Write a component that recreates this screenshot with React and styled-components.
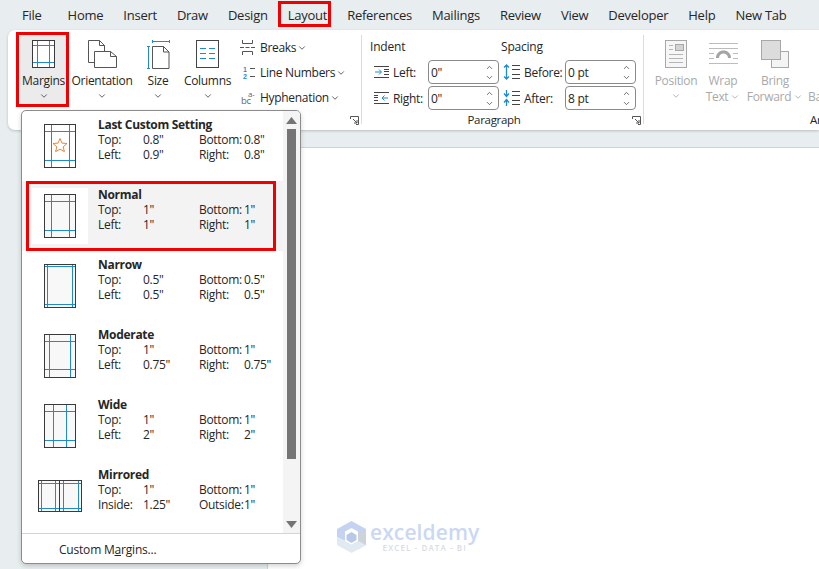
import React from 'react';
import styled, { createGlobalStyle } from 'styled-components';
import { ChevronDown, ChevronUp } from 'lucide-react';

const GlobalStyle = createGlobalStyle`
  html, body { margin: 0; padding: 0; }
  body {
    font-family: "Open Sans", "Noto Sans", "Liberation Sans", sans-serif;
    color: #262626;
    background: #e8edf0;
  }
`;

const Page = styled.div`
  width: 819px;
  height: 569px;
  position: relative;
  overflow: hidden;
  display: flex;
  flex-direction: column;
  background: #e8edf0;
`;

const TabBar = styled.div`
  height: 30px;
  display: flex;
  align-items: center;
  gap: 20px;
  padding-left: 22px;
  font-size: 13px;
  letter-spacing: -0.25px;
`;

const Tab = styled.span`
  position: relative;
  line-height: 30px;
  &:first-child { margin-right: 6px; }
  ${p => p.$marked && `
    &::after {
      content: '';
      position: absolute;
      left: -10px;
      right: -4px;
      top: 1px;
      bottom: 3px;
      border: 3px solid #f00000;
    }
  `}
`;

const Ribbon = styled.div`
  height: 100px;
  margin-left: 8px;
  padding-top: 4px;
  box-sizing: border-box;
  background: #fff;
  border-radius: 7px 0 0 7px;
  box-shadow: 0 1px 3px rgba(0,0,0,0.2);
  display: flex;
  overflow: hidden;
  flex-shrink: 0;
`;

const Group = styled.div`
  width: ${p => p.$w}px;
  flex-shrink: 0;
  display: flex;
  flex-direction: column;
  position: relative;
  box-sizing: border-box;
`;

const GroupBody = styled.div`
  height: 76px;
  display: flex;
  padding-left: ${p => p.$pad}px;
  gap: ${p => p.$gap || 0}px;
`;

const GroupLabel = styled.div`
  height: 20px;
  line-height: 20px;
  font-size: 11.5px;
  letter-spacing: -0.3px;
  text-align: ${p => p.$align || 'center'};
  padding-left: ${p => p.$pad || 0}px;
  padding-right: ${p => p.$padRight || 0}px;
  white-space: nowrap;
`;

const Separator = styled.div`
  width: 1px;
  flex-shrink: 0;
  margin: 1px 0 6px;
  background: #dcdcdc;
`;

const Launcher = styled.svg`
  position: absolute;
  right: 2px;
  bottom: 5px;
  width: 9px;
  height: 9px;
`;

const LargeButton = styled.div`
  width: ${p => p.$w}px;
  height: 72px;
  flex-shrink: 0;
  box-sizing: border-box;
  padding-top: 4px;
  display: flex;
  flex-direction: column;
  align-items: ${p => p.$cut ? 'flex-start' : 'center'};
  position: relative;
  font-size: 12px;
  letter-spacing: -0.3px;
  color: ${p => (p.$off ? '#a9a9a9' : '#262626')};
  background: ${p => (p.$active ? '#ebebeb' : 'transparent')};
  border-radius: 2px;
  ${p => p.$marked && `
    &::after {
      content: '';
      position: absolute;
      left: -4px;
      right: -2px;
      top: -2px;
      bottom: -1px;
      border: 3px solid #f00000;
    }
  `}
`;

const IconSlot = styled.div`
  height: 32px;
  display: flex;
  align-items: center;
  justify-content: center;
`;

const ButtonText = styled.div`
  height: 16px;
  line-height: 16px;
  white-space: nowrap;
  display: flex;
  align-items: center;
  gap: 2px;
  &:nth-child(2) { margin-top: 3px; }
`;

const Caret = styled.div`
  height: 11px;
  margin-top: 1px;
  display: flex;
  align-items: center;
  justify-content: center;
`;

const SmallStack = styled.div`
  margin: 1px 0 0 4px;
  display: flex;
  flex-direction: column;
`;

const SmallRow = styled.div`
  height: 26px;
  display: flex;
  align-items: center;
  gap: 5px;
  font-size: 12px;
  letter-spacing: -0.3px;
  white-space: nowrap;
`;

const SmallText = styled.span`
  display: flex;
  align-items: center;
  gap: 1px;
`;

const SmallIcon = styled.div`
  width: 15px;
  height: 16px;
  display: flex;
  align-items: center;
  justify-content: center;
`;

const FieldColumn = styled.div`
  width: ${p => p.$w}px;
  flex-shrink: 0;
  display: flex;
  flex-direction: column;
  gap: 2px;
`;

const FieldHeading = styled.div`
  height: 24px;
  line-height: 26px;
  font-size: 12px;
  letter-spacing: -0.2px;
`;

const FieldRow = styled.div`
  height: 24px;
  display: flex;
  align-items: center;
  padding-left: ${p => p.$pad || 0}px;
  font-size: 12px;
  letter-spacing: -0.3px;
`;

const FieldLabel = styled.span`
  width: ${p => p.$w}px;
  margin-left: 3px;
  padding: 1px 0 0 1px;
  box-sizing: border-box;
  white-space: nowrap;
`;

const Spinner = styled.div`
  width: 71px;
  height: 24px;
  box-sizing: border-box;
  border: 1px solid #8a8a8a;
  border-radius: 4px;
  padding-left: 2px;
  display: flex;
  align-items: center;
  justify-content: space-between;
  font-size: 12px;
`;

const SpinArrows = styled.div`
  width: 17px;
  display: flex;
  flex-direction: column;
  align-items: center;
  gap: 1px;
  color: #444;
`;

const Workspace = styled.div`
  flex: 1;
  display: flex;
  padding: 17px 0 0 267px;
`;

const Sheet = styled.div`
  flex: 1;
  background: #fff;
  border-top: 1px solid #d0d3d5;
  border-left: 1px solid #d0d3d5;
`;

const Dropdown = styled.div`
  position: absolute;
  left: 21px;
  top: 110px;
  width: 280px;
  height: 454px;
  box-sizing: border-box;
  background: #fff;
  border: 1px solid #8c8c8c;
  border-radius: 5px;
  box-shadow: 0 2px 5px rgba(0,0,0,0.18);
  display: flex;
  flex-direction: column;
  overflow: hidden;
`;

const ListArea = styled.div`
  height: 422px;
  display: flex;
  border-bottom: 1px solid #d4d4d4;
`;

const MarginList = styled.div`
  width: 261px;
  flex-shrink: 0;
`;

const MarginItem = styled.div`
  height: 70px;
  display: flex;
  align-items: center;
  position: relative;
  padding-left: 10px;
  box-sizing: border-box;
  background: ${p => (p.$selected ? '#f3f3f3' : 'transparent')};
  ${p => p.$selected && `
    &::after {
      content: '';
      position: absolute;
      left: 4px;
      right: 7px;
      top: 0;
      bottom: 0;
      border: 3px solid #f00000;
    }
  `}
`;

const ThumbCell = styled.div`
  width: 56px;
  height: 56px;
  flex-shrink: 0;
  display: flex;
  align-items: center;
  justify-content: center;
  background: ${p => (p.$selected ? '#fff' : 'transparent')};
`;

const ItemText = styled.div`
  margin-left: 10px;
  font-size: 12px;
  letter-spacing: -0.3px;
  line-height: 15px;
  align-self: flex-start;
  padding-top: 6px;
`;

const ItemTitle = styled.div`
  font-weight: 700;
`;

const SpecGrid = styled.div`
  display: grid;
  grid-template-columns: 45px 56px 45px auto;
  white-space: nowrap;
`;

const ScrollTrack = styled.div`
  width: 16px;
  padding-right: 1px;
  background: #f4f4f4;
  display: flex;
  flex-direction: column;
  align-items: center;
  position: relative;
`;

const ScrollArrow = styled.div`
  height: 18px;
  display: flex;
  align-items: center;
  justify-content: center;
  flex-shrink: 0;
`;

const ScrollThumb = styled.div`
  width: 9px;
  height: 330px;
  background: #757575;
`;

const ScrollGap = styled.div`
  flex: 1;
`;

const CustomRow = styled.div`
  flex: 1;
  display: flex;
  align-items: center;
  padding: 1px 0 0 37px;
  font-size: 12px;
  letter-spacing: -0.2px;
  white-space: pre;
`;

const Watermark = styled.div`
  position: absolute;
  left: 337px;
  top: 521px;
  display: flex;
  align-items: center;
  gap: 4px;
  pointer-events: none;
`;

const WatermarkText = styled.div`
  display: flex;
  flex-direction: column;
  align-items: center;
`;

const WatermarkName = styled.div`
  font-family: "Open Sans", sans-serif;
  font-size: 21px;
  font-weight: 600;
  line-height: 21px;
  letter-spacing: 0.1px;
  color: #cbd8f3;
`;

const WatermarkTag = styled.div`
  font-size: 8px;
  line-height: 9px;
  letter-spacing: 1.1px;
  font-weight: 600;
  color: #d6dde6;
`;

const BLUE = '#1f8ad2';
const INK = '#3a3a3a';

// page thumbnail used in the margins list
const PageThumb = ({ v, h }) => (
  <svg width="32" height="44" viewBox="0 0 32 44">
    <rect x="0.5" y="0.5" width="31" height="43" fill="#f8f8f8" stroke={INK} />
    {v.map(x => <line key={x} x1={x + 0.5} x2={x + 0.5} y1="1" y2="43" stroke={BLUE} />)}
    {h.map(y => <line key={y} y1={y + 0.5} y2={y + 0.5} x1="1" x2="31" stroke={BLUE} />)}
    <rect x="0.5" y="0.5" width="31" height="43" fill="none" stroke={INK} />
  </svg>
);

const StarThumb = () => (
  <svg width="32" height="44" viewBox="0 0 32 44">
    <rect x="0.5" y="0.5" width="31" height="43" fill="#fff" stroke={INK} />
    {[7, 25].map(x => <line key={x} x1={x + 0.5} x2={x + 0.5} y1="1" y2="43" stroke={BLUE} />)}
    {[7, 36].map(y => <line key={y} y1={y + 0.5} y2={y + 0.5} x1="1" x2="31" stroke={BLUE} />)}
    <path d="M16 14.500l2 4.600 5 .4-3.800 3.300 1.200 4.900-4.400-2.600-4.400 2.600 1.200-4.900-3.800-3.300 5-.4z" fill="none" stroke="#e8853a" />
  </svg>
);

const MirroredThumb = () => (
  <svg width="44" height="32" viewBox="0 0 44 32">
    <rect x="0.5" y="0.5" width="43" height="31" fill="#f8f8f8" stroke={INK} />
    {[3, 17, 25, 40].map(x => <line key={x} x1={x + 0.5} x2={x + 0.5} y1="1" y2="31" stroke={BLUE} />)}
    {[3, 28].map(y => <line key={y} y1={y + 0.5} y2={y + 0.5} x1="1" x2="43" stroke={BLUE} />)}
    <line x1="21.500" x2="21.500" y1="1" y2="31" stroke={INK} />
    <rect x="0.5" y="0.5" width="43" height="31" fill="none" stroke={INK} />
  </svg>
);

const MarginsIcon = () => (
  <svg width="23" height="28" viewBox="0 0 23 28">
    <rect x="0.5" y="0.5" width="22" height="27" fill="#fff" stroke={INK} />
    {[5, 17].map(x => <line key={x} x1={x + 0.5} x2={x + 0.5} y1="1" y2="27" stroke={BLUE} />)}
    {[5, 22].map(y => <line key={y} y1={y + 0.5} y2={y + 0.5} x1="1" x2="22" stroke={BLUE} />)}
  </svg>
);

const OrientationIcon = () => (
  <svg width="29" height="28" viewBox="0 0 29 28">
    <path d="M6.500 22.500H.5V.5h11l5 5v6" fill="#fff" stroke="#555" />
    <path d="M11.500 .5v5h5" fill="none" stroke="#555" />
    <path d="M6.500 11.500h16l6 5v11h-22z" fill="#fff" stroke="#555" />
    <path d="M22.500 11.500v5h6" fill="none" stroke="#555" />
  </svg>
);

const SizeIcon = () => (
  <svg width="23" height="29" viewBox="0 0 23 29">
    <path d="M5.500 6.500h11l5.500 5.500v16.500h-16.500z" fill="#fff" stroke="#555" />
    <path d="M16.500 6.500v5.500h5.500" fill="none" stroke="#555" />
    <path d="M5 1.500h17M5.500 0v3M22.500 0v3M1.500 6.500v22M0 6.500h3M0 28.500h3" fill="none" stroke={BLUE} />
  </svg>
);

const ColumnsIcon = () => (
  <svg width="23" height="28" viewBox="0 0 23 28">
    <rect x="0.5" y="0.5" width="22" height="27" fill="#fff" stroke="#444" />
    <path d="M4 8.500h6M13 8.500h6M4 13.500h6M13 13.500h6M4 18.500h6M13 18.500h6" stroke={BLUE} />
  </svg>
);

const BreaksIcon = () => (
  <svg width="15" height="15" viewBox="0 0 15 15">
    <path d="M2.500 0v3.500h10V0M2.500 15v-3.500h10V15" fill="none" stroke="#555" />
    <path d="M0 7.500h4M5.500 7.500h4M11 7.500h4" stroke="#555" />
  </svg>
);

const LineNumbersIcon = () => (
  <svg width="15" height="16" viewBox="0 0 15 16">
    <text x="3" y="6.500" fontSize="7" fontFamily="Liberation Sans" fontWeight="700" fill={BLUE}>1</text>
    <text x="3" y="14" fontSize="7" fontFamily="Liberation Sans" fontWeight="700" fill={BLUE}>2</text>
    <path d="M10 3.500h5M10 11.500h5" stroke="#555" />
  </svg>
);

const HyphenIcon = () => (
  <svg width="15" height="16" viewBox="0 0 15 16">
    <text x="8" y="6.500" fontSize="8" fontFamily="Open Sans" fill="#666">a-</text>
    <text x="1" y="14" fontSize="9.500" fontFamily="Open Sans" fill="#666">bc</text>
  </svg>
);

const IndentIcon = ({ right }) => (
  <svg width="15" height="12" viewBox="0 0 15 12">
    <path d="M0 .5h15M0 11.500h15" stroke="#444" />
    {right ? (
      <>
        <path d="M0 3.500h4M0 5.500h4M0 8.500h4" stroke="#444" />
        <path d="M14 6H8M10.500 3.500L8 6l2.500 2.500" fill="none" stroke={BLUE} />
      </>
    ) : (
      <>
        <path d="M10 3.500h5M10 5.500h5M10 8.500h5" stroke="#444" />
        <path d="M1 6h6M5 3.500L7.500 6 5 8.500" fill="none" stroke={BLUE} />
      </>
    )}
  </svg>
);

const SpacingIcon = ({ after }) => (
  <svg width="17" height="16" viewBox="0 0 17 16">
    <path d="M9 1.500h8M9 5.500h8M9 10.500h8M9 14.500h8" stroke="#444" />
    {after ? (
      <path d="M3.500 0v6M1 3.500L3.500 6.500 6 3.500M3.500 16v-6M1 12.500L3.500 9.500 6 12.500" fill="none" stroke={BLUE} strokeWidth="1.300" />
    ) : (
      <path d="M3.500 1v14M1 3.500L3.500 1 6 3.500M1 12.500L3.500 15 6 12.500" fill="none" stroke={BLUE} strokeWidth="1.300" />
    )}
  </svg>
);

const PositionIcon = () => (
  <svg width="22" height="28" viewBox="0 0 22 28">
    <rect x="0.5" y="0.5" width="21" height="27" fill="#f6f6f6" stroke="#a8a8a8" />
    <rect x="10.500" y="4.500" width="8" height="6" fill="#d4d4d4" stroke="#a8a8a8" />
    <path d="M4 5.500h4M4 9.500h4M4 14.500h14M4 18.500h14M4 22.500h14" stroke="#b5b5b5" />
  </svg>
);

const WrapIcon = () => (
  <svg width="29" height="22" viewBox="0 0 29 22">
    <path d="M0 .5h29M0 5.500h29M0 10.500h5M24 10.500h5M0 15.500h5M24 15.500h5M0 20.500h29" stroke="#bcbcbc" />
    <path d="M7 15c0-10 15-10 15 0h-3c0-6-9-6-9 0z" fill="#a4a4a4" />
  </svg>
);

const ForwardIcon = () => (
  <svg width="28" height="28" viewBox="0 0 28 28">
    <rect x="10.500" y="11.500" width="17" height="16" fill="#f4f4f4" stroke="#a8a8a8" />
    <rect x="0.5" y="0.5" width="19" height="19" fill="#dcdcdc" stroke="#a8a8a8" />
  </svg>
);

const LauncherIcon = () => (
  <Launcher viewBox="0 0 9 9">
    <path d="M.5 3V.5H8.500V8.500H6M3 3l4 4M4 7h3V4" fill="none" stroke="#555" />
  </Launcher>
);

const Down = ({ off }) => <ChevronDown size={10} strokeWidth={2} color={off ? '#aaa' : '#444'} />;

const Triangle = ({ up }) => (
  <svg width="11" height="7" viewBox="0 0 11 7">
    <path d={up ? 'M5.500 0L11 7H0z' : 'M0 0h11L5.500 7z'} fill="#757575" />
  </svg>
);

const Logo = () => (
  <svg width="29" height="32" viewBox="0 0 29 32">
    <path d="M14.500 0L29 8v9l-8 -4.500v-2L14.500 7 8 10.500V20l-8 -4V8z" fill="#c5d3f2" />
    <path d="M29 8v16l-8 4.500V12.500z" fill="#ccd3da" />
    <path d="M0 16l8 4 6.500 3.500L21 20l8 4-14.500 8L0 24z" fill="#e1eaf1" />
    <path d="M14.500 11l5 3v5l-5 3-5-3v-5z" fill="#b9c7e8" />
  </svg>
);

const tabs = ['File', 'Home', 'Insert', 'Draw', 'Design', 'Layout', 'References', 'Mailings', 'Review', 'View', 'Developer', 'Help', 'New Tab'];

const presets = [
  { name: 'Last Custom Setting', thumb: <StarThumb />, spec: ['Top:', '0.8"', 'Bottom:', '0.8"', 'Left:', '0.9"', 'Right:', '0.8"'] },
  { name: 'Normal', selected: true, thumb: <PageThumb v={[7, 25]} h={[7, 36]} />, spec: ['Top:', '1"', 'Bottom:', '1"', 'Left:', '1"', 'Right:', '1"'] },
  { name: 'Narrow', thumb: <PageThumb v={[3, 28]} h={[2, 40]} />, spec: ['Top:', '0.5"', 'Bottom:', '0.5"', 'Left:', '0.5"', 'Right:', '0.5"'] },
  { name: 'Moderate', thumb: <PageThumb v={[5, 26]} h={[7, 35]} />, spec: ['Top:', '1"', 'Bottom:', '1"', 'Left:', '0.75"', 'Right:', '0.75"'] },
  { name: 'Wide', thumb: <PageThumb v={[9, 22]} h={[7, 36]} />, spec: ['Top:', '1"', 'Bottom:', '1"', 'Left:', '2"', 'Right:', '2"'] },
  { name: 'Mirrored', thumb: <MirroredThumb />, spec: ['Top:', '1"', 'Bottom:', '1"', 'Inside:', '1.25"', 'Outside:', '1"'] },
];

const SpinBox = ({ value }) => (
  <Spinner>
    <span>{value}</span>
    <SpinArrows>
      <ChevronUp size={9} strokeWidth={2} />
      <ChevronDown size={9} strokeWidth={2} />
    </SpinArrows>
  </Spinner>
);

const App = () => {
  return (
    <Page>
      <GlobalStyle />
      <TabBar>
        {tabs.map(t => <Tab key={t} $marked={t === 'Layout'}>{t}</Tab>)}
      </TabBar>

      <Ribbon>
        <Group $w={353}>
          <GroupBody $pad={12} $gap={5}>
            <LargeButton $w={47} $active $marked>
              <IconSlot><MarginsIcon /></IconSlot>
              <ButtonText>Margins</ButtonText>
              <Caret><Down /></Caret>
            </LargeButton>
            <LargeButton $w={60}>
              <IconSlot><OrientationIcon /></IconSlot>
              <ButtonText>Orientation</ButtonText>
              <Caret><Down /></Caret>
            </LargeButton>
            <LargeButton $w={42}>
              <IconSlot><SizeIcon /></IconSlot>
              <ButtonText>Size</ButtonText>
              <Caret><Down /></Caret>
            </LargeButton>
            <LargeButton $w={47}>
              <IconSlot><ColumnsIcon /></IconSlot>
              <ButtonText>Columns</ButtonText>
              <Caret><Down /></Caret>
            </LargeButton>
            <SmallStack>
              <SmallRow><SmallIcon><BreaksIcon /></SmallIcon><SmallText>Breaks<Down /></SmallText></SmallRow>
              <SmallRow><SmallIcon><LineNumbersIcon /></SmallIcon><SmallText>Line Numbers<Down /></SmallText></SmallRow>
              <SmallRow><SmallIcon><HyphenIcon /></SmallIcon><SmallText>Hyphenation<Down /></SmallText></SmallRow>
            </SmallStack>
          </GroupBody>
          <LauncherIcon />
        </Group>
        <Separator />

        <Group $w={281}>
          <GroupBody $pad={8}>
            <FieldColumn $w={131}>
              <FieldHeading>Indent</FieldHeading>
              <FieldRow $pad={4}>
                <IndentIcon />
                <FieldLabel $w={36}>Left:</FieldLabel>
                <SpinBox value={'0"'} />
              </FieldRow>
              <FieldRow $pad={4}>
                <IndentIcon right />
                <FieldLabel $w={36}>Right:</FieldLabel>
                <SpinBox value={'0"'} />
              </FieldRow>
            </FieldColumn>
            <FieldColumn $w={136}>
              <FieldHeading>Spacing</FieldHeading>
              <FieldRow $pad={2}>
                <SpacingIcon />
                <FieldLabel $w={42}>Before:</FieldLabel>
                <SpinBox value="0 pt" />
              </FieldRow>
              <FieldRow $pad={2}>
                <SpacingIcon after />
                <FieldLabel $w={42}>After:</FieldLabel>
                <SpinBox value="8 pt" />
              </FieldRow>
            </FieldColumn>
          </GroupBody>
          <GroupLabel $padRight={17}>Paragraph</GroupLabel>
          <LauncherIcon />
        </Group>
        <Separator />

        <Group $w={200}>
          <GroupBody $pad={9} $gap={5}>
            <LargeButton $w={46} $off>
              <IconSlot><PositionIcon /></IconSlot>
              <ButtonText>Position</ButtonText>
              <Caret><Down off /></Caret>
            </LargeButton>
            <LargeButton $w={38} $off>
              <IconSlot><WrapIcon /></IconSlot>
              <ButtonText>Wrap</ButtonText>
              <ButtonText>Text <Down off /></ButtonText>
            </LargeButton>
            <LargeButton $w={56} $off>
              <IconSlot><ForwardIcon /></IconSlot>
              <ButtonText>Bring</ButtonText>
              <ButtonText>Forward <Down off /></ButtonText>
            </LargeButton>
            <LargeButton $w={60} $off $cut>
              <IconSlot />
              <ButtonText>&nbsp;</ButtonText>
              <ButtonText>Backward</ButtonText>
            </LargeButton>
          </GroupBody>
          <GroupLabel $align="left" $pad={166}>Arrange</GroupLabel>
        </Group>
      </Ribbon>

      <Workspace>
        <Sheet />
      </Workspace>

      <Dropdown>
        <ListArea>
          <MarginList>
            {presets.map(p => (
              <MarginItem key={p.name} $selected={p.selected}>
                <ThumbCell $selected={p.selected}>{p.thumb}</ThumbCell>
                <ItemText>
                  <ItemTitle>{p.name}</ItemTitle>
                  <SpecGrid>
                    {p.spec.map((s, i) => <span key={i}>{s}</span>)}
                  </SpecGrid>
                </ItemText>
              </MarginItem>
            ))}
          </MarginList>
          <ScrollTrack>
            <ScrollArrow><Triangle up /></ScrollArrow>
            <ScrollThumb />
            <ScrollGap />
            <ScrollArrow><Triangle /></ScrollArrow>
          </ScrollTrack>
        </ListArea>
        <CustomRow>Custom M<u>a</u>rgins...</CustomRow>
      </Dropdown>

      <Watermark>
        <Logo />
        <WatermarkText>
          <WatermarkName>exceldemy</WatermarkName>
          <WatermarkTag>EXCEL - DATA - BI</WatermarkTag>
        </WatermarkText>
      </Watermark>
    </Page>
  );
};

export default App;
